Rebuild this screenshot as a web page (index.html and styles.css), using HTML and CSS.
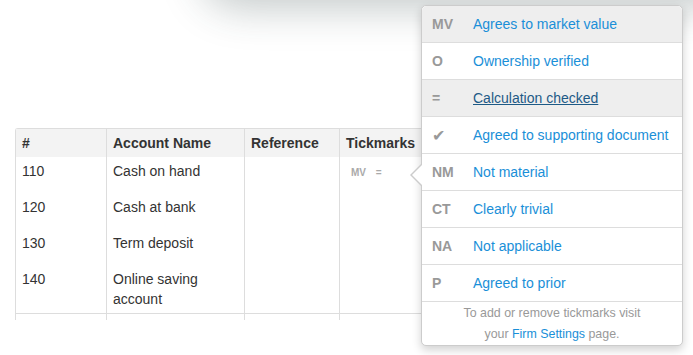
FILE: index.html
```html
<!DOCTYPE html>
<html lang="en">
<head>
    <meta charset="UTF-8">
    <title>Tickmarks</title>
    <link rel="stylesheet" href="styles.css">
</head>
<body>
<div class="page">
    <div class="modal-edge"></div>
    <div class="grid-wrap">
        <table class="grid">
            <thead>
            <tr>
                <th class="c-num">#</th>
                <th class="c-name">Account Name</th>
                <th class="c-ref">Reference</th>
                <th class="c-tick">Tickmarks</th>
                <th class="c-bal"></th>
            </tr>
            </thead>
            <tbody>
            <tr>
                <td>110</td>
                <td>Cash on hand</td>
                <td></td>
                <td><span class="marks">MV <span class="eq">=</span></span></td>
                <td></td>
            </tr>
            <tr><td>120</td><td>Cash at bank</td><td></td><td></td><td></td></tr>
            <tr><td>130</td><td>Term deposit</td><td></td><td></td><td></td></tr>
            <tr class="last"><td>140</td><td>Online saving account</td><td></td><td></td><td></td></tr>
            <tr><td></td><td></td><td></td><td></td><td></td></tr>
            </tbody>
        </table>
    </div>

    <div class="tick-pop">
        <ul class="tick-list">
            <li class="active"><span class="code">MV</span><a>Agrees to market value</a></li>
            <li><span class="code">O</span><a>Ownership verified</a></li>
            <li class="hover"><span class="code">=</span><a>Calculation checked</a></li>
            <li><span class="code tick">&#10004;</span><a>Agreed to supporting document</a></li>
            <li><span class="code">NM</span><a>Not material</a></li>
            <li><span class="code">CT</span><a>Clearly trivial</a></li>
            <li><span class="code">NA</span><a>Not applicable</a></li>
            <li><span class="code">P</span><a>Agreed to prior</a></li>
        </ul>
        <div class="tick-foot">
            To add or remove tickmarks visit<br>
            your <a>Firm Settings</a> page.
        </div>
    </div>
</div>
</body>
</html>
```

FILE: styles.css
```css
html, body {
    margin: 0;
    padding: 0;
    background: #fff;
}

body {
    font-family: "Liberation Sans", Arial, sans-serif;
    font-size: 14px;
    color: #333;
}

.page {
    position: relative;
    width: 693px;
    height: 355px;
    overflow: hidden;
}

/* shadow of the panel sitting above the viewport */
.modal-edge {
    position: absolute;
    left: 200px;
    right: -40px;
    top: -80px;
    height: 80px;
    border-radius: 40px;
    box-shadow: 0 8px 40px rgba(40, 60, 60, 0.28);
}

.grid-wrap {
    margin: 128px 0 0 15px;
    width: 668px;
    height: 192px;
    overflow: hidden;
}

.grid {
    border-collapse: separate;
    border-spacing: 0;
    width: 668px;
    table-layout: fixed;
    border-top: 1px solid #ddd;
    border-left: 1px solid #ddd;
    border-top-left-radius: 3px;
}

.grid th,
.grid td {
    text-align: left;
    vertical-align: top;
    padding: 4px 6px;
    line-height: 20px;
    border-right: 1px solid #ddd;
}

.grid th {
    background: #f3f3f3;
    font-weight: bold;
    height: 20px;
}

.grid td {
    height: 28px;
}

.grid tr.last td {
    height: 40px;
    border-bottom: 1px solid #ddd;
}

.c-num { width: 78px; }
.c-name { width: 125px; }
.c-ref { width: 82px; }
.c-tick { width: 207px; }

.marks {
    display: inline-block;
    margin-left: 5px;
    font-size: 10px;
    font-weight: bold;
    color: #aaa;
}

.marks .eq {
    margin-left: 7px;
}

.tick-pop {
    position: absolute;
    left: 421px;
    top: 5px;
    width: 260px;
    background: #fff;
    border: 1px solid #ccc;
    border-radius: 5px;
    box-shadow: 0 4px 10px rgba(0, 0, 0, 0.18);
}

.tick-pop:before,
.tick-pop:after {
    content: "";
    position: absolute;
    top: 158px;
    border-top: 11px solid transparent;
    border-bottom: 11px solid transparent;
}

.tick-pop:before {
    left: -12px;
    border-right: 11px solid #ccc;
}

.tick-pop:after {
    left: -10px;
    border-right: 11px solid #fff;
}

.tick-list {
    list-style: none;
    margin: 0;
    padding: 0;
}

.tick-list li {
    display: flex;
    align-items: center;
    height: 36px;
    border-bottom: 1px solid #ddd;
    padding-left: 10px;
}

.tick-list li:first-child {
    border-radius: 5px 5px 0 0;
}

.tick-list li.active,
.tick-list li.hover {
    background: #eee;
}

.tick-list .code {
    width: 41px;
    font-weight: bold;
    color: #999;
}

.tick-list .code.tick {
    font-size: 16px;
    font-weight: normal;
}

.tick-list a {
    color: #1a8fd8;
    cursor: pointer;
}

.tick-list li.hover a {
    color: #1d5a86;
    text-decoration: underline;
}

.tick-foot {
    text-align: center;
    font-size: 12.4px;
    line-height: 21px;
    color: #999;
    padding: 1px 0 0;
}

.tick-foot a {
    color: #1a8fd8;
}
```
